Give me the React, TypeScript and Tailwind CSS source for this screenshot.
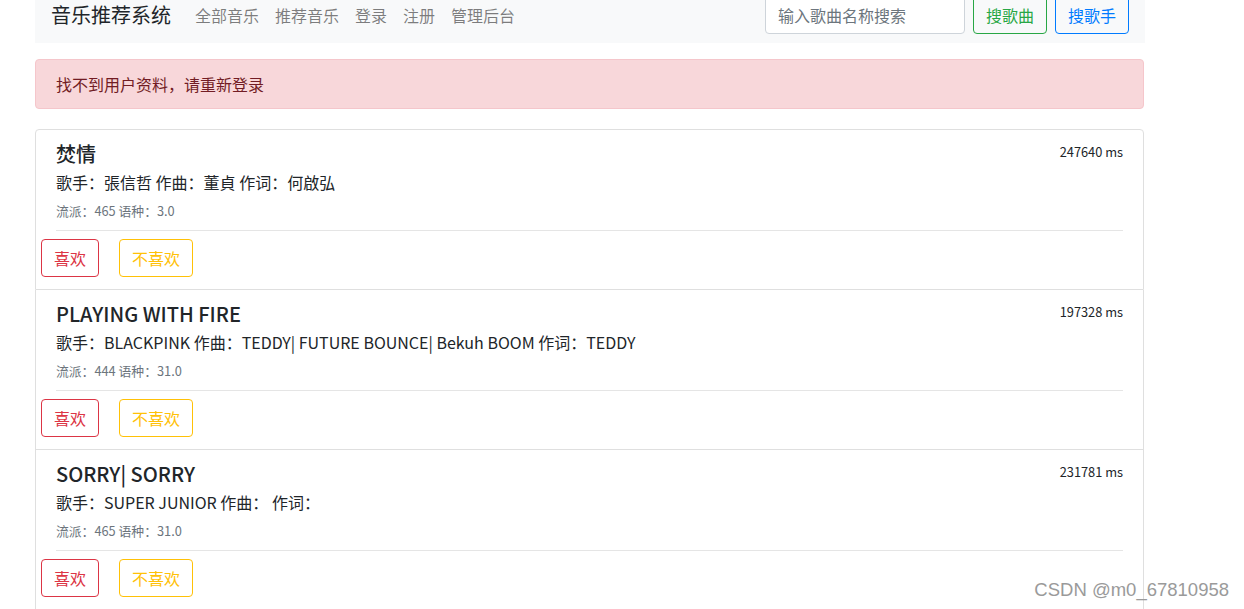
import * as React from "react"

const songs = [
  {
    title: "焚情",
    ms: "247640 ms",
    info: "歌手：張信哲 作曲：董貞 作词：何啟弘",
    meta: "流派：465 语种：3.0",
  },
  {
    title: "PLAYING WITH FIRE",
    ms: "197328 ms",
    info: "歌手：BLACKPINK 作曲：TEDDY| FUTURE BOUNCE| Bekuh BOOM 作词：TEDDY",
    meta: "流派：444 语种：31.0",
  },
  {
    title: "SORRY| SORRY",
    ms: "231781 ms",
    info: "歌手：SUPER JUNIOR 作曲： 作词：",
    meta: "流派：465 语种：31.0",
  },
]

const navLinks = ["全部音乐", "推荐音乐", "登录", "注册", "管理后台"]

export default function App() {
  return (
    <div
      className="relative h-[609px] overflow-hidden bg-white text-[#212529]"
      style={{ fontFamily: '"Noto Sans CJK SC", sans-serif' }}
    >
      <div className="mx-[35px] w-[1110px]">
        {/* 导航栏 */}
        <nav className="-mt-[13px] flex h-[56px] items-center bg-[#f8f9fa] px-4 py-2">
          <span className="mr-4 text-[20px] leading-[30px]">音乐推荐系统</span>
          <div className="flex">
            {navLinks.map((l) => (
              <span key={l} className="px-2 py-2 text-[16px] leading-6 text-[rgba(0,0,0,0.5)]">
                {l}
              </span>
            ))}
          </div>
          <div className="ml-auto flex items-center">
            <div className="flex h-[38px] w-[200px] items-center rounded border border-[#ced4da] bg-white px-3 text-[16px] text-[#6c757d]">
              输入歌曲名称搜索
            </div>
            <button className="ml-2 h-[38px] rounded border border-[#28a745] px-3 text-[16px] text-[#28a745]">
              搜歌曲
            </button>
            <button className="ml-2 h-[38px] rounded border border-[#007bff] px-3 text-[16px] text-[#007bff]">
              搜歌手
            </button>
          </div>
        </nav>

        {/* 提示 */}
        <div className="mt-4 w-[1109px] rounded border border-[#f5c6cb] bg-[#f8d7da] px-5 py-3 text-[16px] leading-6 text-[#721c24]">
          找不到用户资料，请重新登录
        </div>

        {/* 歌曲列表 */}
        <div className="mt-[20px] w-[1109px]">
          {songs.map((s, i) => (
            <div
              key={s.title}
              className={`border-x border-b border-[#dfdfdf] px-5 pt-3 ${i === 0 ? "h-[161px] rounded-t border-t" : "h-[160px]"}`}
            >
              <div className="flex items-start justify-between">
                <h5 className="text-[20px] font-medium leading-6">{s.title}</h5>
                <small className="text-[12.8px] leading-5">{s.ms}</small>
              </div>
              <p className="mt-1 text-[16px] leading-6">{s.info}</p>
              <div className="mt-[7px] text-[12.8px] leading-5 text-[#6c757d]">{s.meta}</div>
              <hr className="mt-[9px] border-t border-[rgba(0,0,0,0.1)]" />
              <div className="-ml-[15px] mt-2 flex gap-5">
                <button className="h-[38px] rounded border border-[#dc3545] px-3 text-[16px] text-[#dc3545]">
                  喜欢
                </button>
                <button className="h-[38px] rounded border border-[#ffc107] px-3 text-[16px] text-[#ffc107]">
                  不喜欢
                </button>
              </div>
            </div>
          ))}
        </div>
      </div>

      <div
        className="absolute bottom-[5px] right-[15px] text-[18.5px] text-[#9a9a9a]"
        style={{ fontFamily: '"Liberation Sans", Arial, sans-serif' }}
      >
        CSDN @m0_67810958
      </div>
    </div>
  )
}
